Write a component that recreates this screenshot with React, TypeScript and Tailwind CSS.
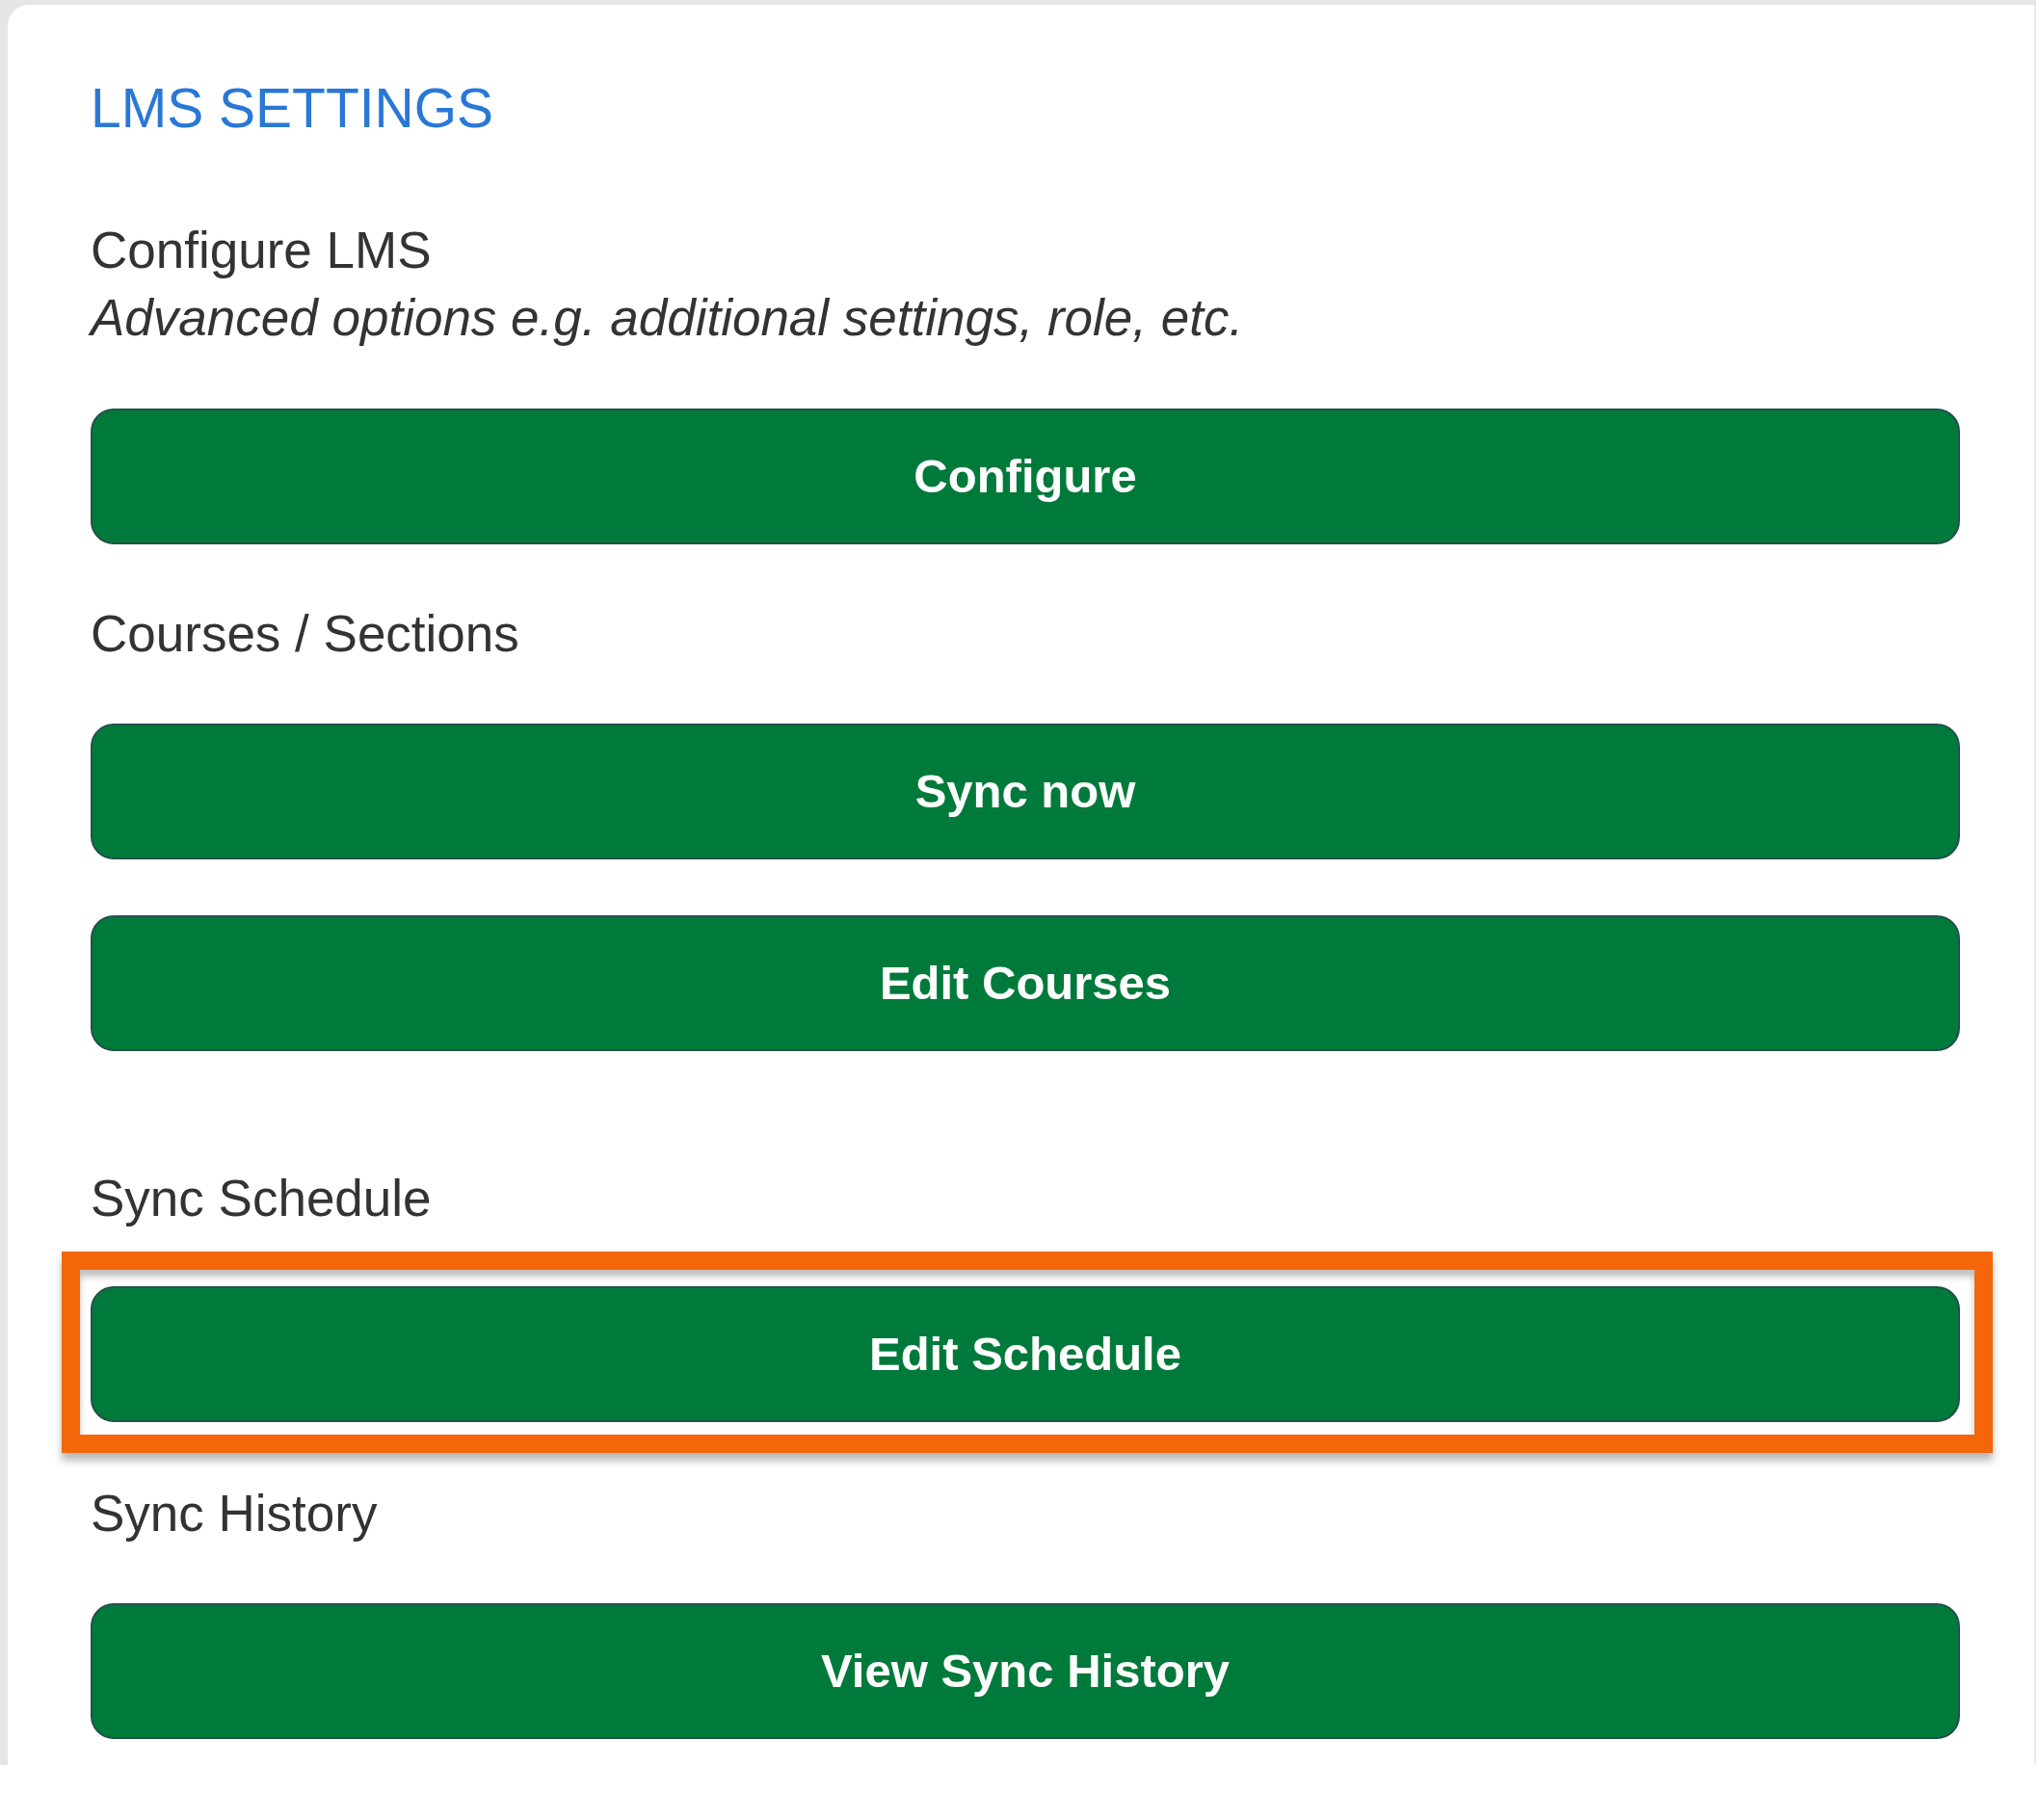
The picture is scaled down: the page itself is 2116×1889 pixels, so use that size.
// LMS settings panel: section labels with full-width green action buttons.
// One button carries an orange callout frame drawn over it.

const FONT = "font-['Liberation_Sans',Arial,sans-serif]";

function ActionButton({ label }: { label: string }) {
  return (
    <button
      type="button"
      className="flex h-[141px] w-full items-center justify-center rounded-[24px] border-2 border-[#23514b] bg-[#007a3a] text-[49px] font-bold text-white"
    >
      {label}
    </button>
  );
}

function Label({ children, className = "" }: { children: React.ReactNode; className?: string }) {
  return <p className={`text-[53px] leading-[70px] text-[#333333] ${className}`}>{children}</p>;
}

export default function App() {
  return (
    <div className={`h-[1889px] w-[2116px] bg-white ${FONT}`}>
      {/* grey frame peeking out on the left / top edges */}
      <div className="h-[1832px] w-[2113px] bg-[#e6e6e6] pl-[8px] pt-[5px]">
        <div className="h-full rounded-tl-[22px] border-r-2 border-[#ebebeb] bg-white pl-[86px] pr-[77px] pt-[73px] pb-[27px]">
          <h1 className="text-[57px] leading-[68px] text-[#2a78d6]">LMS SETTINGS</h1>

          <Label className="mt-[79px]">Configure LMS</Label>
          <p className="text-[53px] italic leading-[70px] text-[#333333]">
            Advanced options e.g. additional settings, role, etc.
          </p>
          <div className="mt-[59px]">
            <ActionButton label="Configure" />
          </div>

          <Label className="mt-[58px]">Courses / Sections</Label>
          <div className="mt-[58px] flex flex-col gap-[58px]">
            <ActionButton label="Sync now" />
            <ActionButton label="Edit Courses" />
          </div>

          <Label className="mt-[118px]">Sync Schedule</Label>
          <div className="relative mt-[56px]">
            <ActionButton label="Edit Schedule" />
            {/* orange callout */}
            <div className="pointer-events-none absolute -bottom-[32px] -left-[30px] -right-[34px] -top-[36px] border-[19px] border-[#f5660a] shadow-[0_8px_8px_rgba(0,0,0,0.28),inset_0_7px_7px_rgba(0,0,0,0.25)]" />
          </div>

          <Label className="mt-[60px]">Sync History</Label>
          <div className="mt-[58px]">
            <ActionButton label="View Sync History" />
          </div>
        </div>
      </div>
    </div>
  );
}
